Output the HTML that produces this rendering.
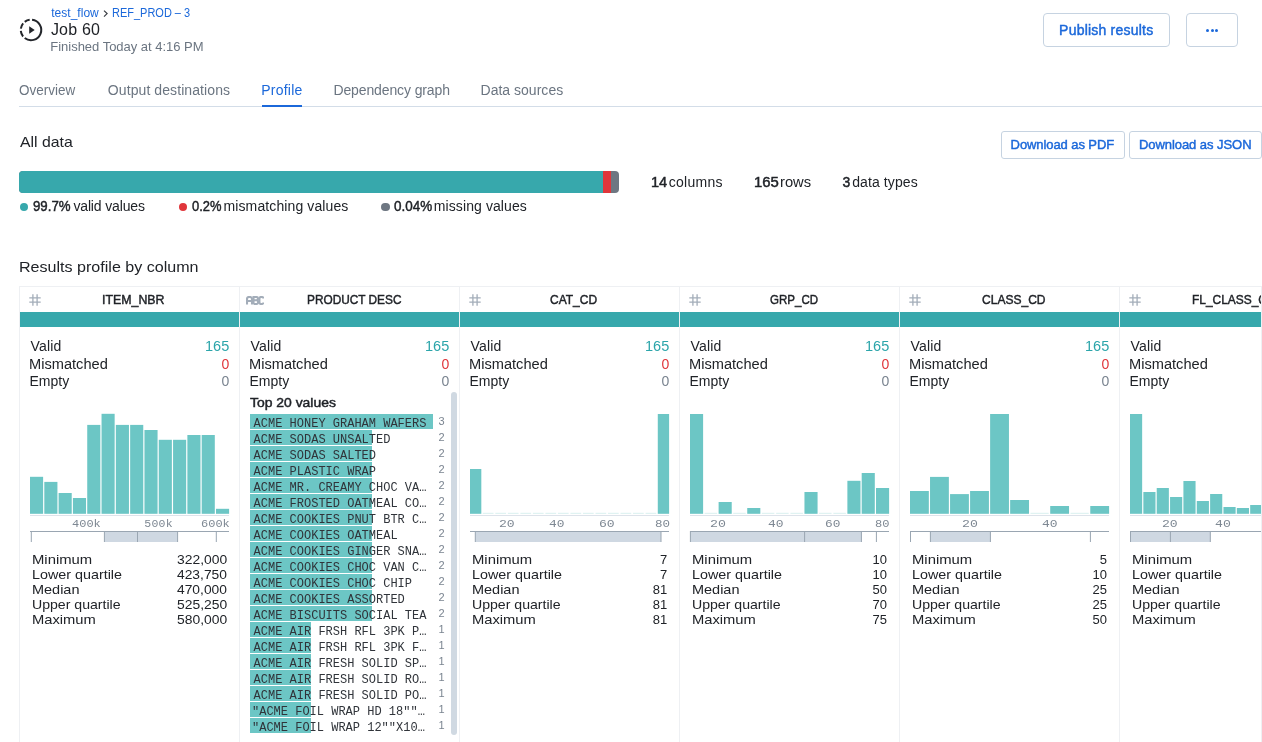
<!DOCTYPE html>
<html><head><meta charset="utf-8"><title>Job 60 Profile</title>
<style>
html,body{margin:0;padding:0;background:#fff;}
body{width:1262px;height:742px;overflow:hidden;position:relative;font-family:"Liberation Sans",sans-serif;}
.t{position:absolute;white-space:pre;}
.r{position:absolute;box-sizing:border-box;}
#wrap{position:absolute;left:0;top:0;width:1262px;height:742px;will-change:transform;}
</style></head><body><div id="wrap">
<svg class="r" style="left:18px;top:17px" width="26" height="26" viewBox="0 0 26 26">
<g fill="none" stroke="#23262b" stroke-width="2">
<path d="M14.07 2.81 A10.25 10.25 0 1 1 6.69 21.08"/>
<path d="M5.08 19.51 A10.25 10.25 0 0 1 2.79 13.95"/>
<path d="M2.84 11.68 A10.25 10.25 0 0 1 5.15 6.41"/>
<path d="M6.75 4.88 A10.25 10.25 0 0 1 11.68 2.84"/>
</g>
<path d="M11.2 9.2 L16.7 13 L11.2 16.8 Z" fill="#23262b"/>
</svg>
<div class="t" style="left:51.20px;top:6px;font-size:12px;line-height:15px;color:#1b68da;letter-spacing:0.025px;">test_flow</div>
<svg class="r" style="left:102px;top:9px" width="8" height="9" viewBox="0 0 8 9"><path d="M2 1.6 L5.1 4.6 L2 7.6" fill="none" stroke="#3a3e44" stroke-width="1.2"/></svg>
<div class="t" style="left:112.08px;top:6px;font-size:12px;line-height:15px;color:#1b68da;transform:scaleX(0.9154);transform-origin:0 0;">REF_PROD – 3</div>
<div class="t" style="left:50.90px;top:20px;font-size:16px;line-height:20px;color:#202328;letter-spacing:0.200px;">Job 60</div>
<div class="t" style="left:50.30px;top:39px;font-size:13px;line-height:16px;color:#6b7581;letter-spacing:-0.017px;">Finished Today at 4:16 PM</div>
<div class="r" style="left:1043px;top:13px;width:127px;height:34px;border:1px solid #c6d3e1;border-radius:4px;"></div>
<div class="t" style="left:1059.10px;top:21px;font-size:14px;line-height:18px;color:#1b68da;letter-spacing:0.214px;-webkit-text-stroke:0.45px currentColor;">Publish results</div>
<div class="r" style="left:1186px;top:13px;width:52px;height:34px;border:1px solid #c6d3e1;border-radius:4px;"></div>
<div class="r" style="left:1206.0px;top:28.6px;width:3px;height:3px;border-radius:50%;background:#1b68da"></div>
<div class="r" style="left:1210.5px;top:28.6px;width:3px;height:3px;border-radius:50%;background:#1b68da"></div>
<div class="r" style="left:1215.0px;top:28.6px;width:3px;height:3px;border-radius:50%;background:#1b68da"></div>
<div class="r" style="left:19px;top:106px;width:1243px;height:1px;background:#d3dde8;"></div>
<div class="r" style="left:262px;top:105px;width:40px;height:2px;background:#1b68da;"></div>
<div class="t" style="left:18.93px;top:81px;font-size:14px;line-height:18px;color:#6b7581;transform:scaleX(0.9618);transform-origin:0 0;">Overview</div>
<div class="t" style="left:107.80px;top:81px;font-size:14px;line-height:18px;color:#6b7581;letter-spacing:0.089px;">Output destinations</div>
<div class="t" style="left:261.30px;top:81px;font-size:14px;line-height:18px;color:#1b68da;letter-spacing:0.217px;">Profile</div>
<div class="t" style="left:333.40px;top:81px;font-size:14px;line-height:18px;color:#6b7581;letter-spacing:-0.113px;">Dependency graph</div>
<div class="t" style="left:480.50px;top:81px;font-size:14px;line-height:18px;color:#6b7581;letter-spacing:0.018px;">Data sources</div>
<div class="t" style="left:19.50px;top:132px;font-size:15px;line-height:19px;color:#202328;transform:scaleX(1.0539);transform-origin:0 0;">All data</div>
<div class="r" style="left:1001px;top:131px;width:124px;height:28px;border:1px solid #c6d3e1;border-radius:3px;"></div>
<div class="t" style="left:1010.60px;top:137px;font-size:13px;line-height:16px;color:#1b68da;letter-spacing:-0.086px;-webkit-text-stroke:0.45px currentColor;">Download as PDF</div>
<div class="r" style="left:1129px;top:131px;width:133px;height:28px;border:1px solid #c6d3e1;border-radius:3px;"></div>
<div class="t" style="left:1138.90px;top:137px;font-size:13px;line-height:16px;color:#1b68da;letter-spacing:-0.053px;-webkit-text-stroke:0.45px currentColor;">Download as JSON</div>
<div class="r" style="left:19px;top:171px;width:600px;height:22px;border-radius:4px;overflow:hidden;background:#6e7782"><div class="r" style="left:0;top:0;width:584px;height:22px;background:#37a8ac"></div><div class="r" style="left:584px;top:0;width:8px;height:22px;background:#e0363b"></div></div>
<div class="r" style="left:19.5px;top:202.7px;width:8.4px;height:8.4px;border-radius:50%;background:#37a8ac"></div>
<div class="t" style="left:33.13px;top:197px;font-size:14px;line-height:18px;color:#202328;transform:scaleX(0.9456);transform-origin:0 0;-webkit-text-stroke:0.45px currentColor;">99.7%</div>
<div class="t" style="left:73.40px;top:197px;font-size:14px;line-height:18px;color:#202328;letter-spacing:-0.145px;">valid values</div>
<div class="r" style="left:178.7px;top:202.7px;width:8.4px;height:8.4px;border-radius:50%;background:#e0363b"></div>
<div class="t" style="left:191.54px;top:197px;font-size:14px;line-height:18px;color:#202328;transform:scaleX(0.9226);transform-origin:0 0;-webkit-text-stroke:0.45px currentColor;">0.2%</div>
<div class="t" style="left:223.50px;top:197px;font-size:14px;line-height:18px;color:#202328;letter-spacing:0.112px;">mismatching values</div>
<div class="r" style="left:381.4px;top:202.7px;width:8.4px;height:8.4px;border-radius:50%;background:#6e7782"></div>
<div class="t" style="left:394.32px;top:197px;font-size:14px;line-height:18px;color:#202328;transform:scaleX(0.9612);transform-origin:0 0;-webkit-text-stroke:0.45px currentColor;">0.04%</div>
<div class="t" style="left:433.80px;top:197px;font-size:14px;line-height:18px;color:#202328;letter-spacing:0.092px;">missing values</div>
<div class="t" style="left:650.55px;top:173px;font-size:14px;line-height:18px;color:#202328;transform:scaleX(1.0426);transform-origin:0 0;-webkit-text-stroke:0.45px currentColor;">14</div>
<div class="t" style="left:668.80px;top:173px;font-size:14px;line-height:18px;color:#202328;letter-spacing:0.267px;">columns</div>
<div class="t" style="left:753.93px;top:173px;font-size:14px;line-height:18px;color:#202328;transform:scaleX(1.0645);transform-origin:0 0;-webkit-text-stroke:0.45px currentColor;">165</div>
<div class="t" style="left:779.55px;top:173px;font-size:14px;line-height:18px;color:#202328;transform:scaleX(1.0532);transform-origin:0 0;">rows</div>
<div class="t" style="left:842.60px;top:173px;font-size:14px;line-height:18px;color:#202328;-webkit-text-stroke:0.45px currentColor;">3</div>
<div class="t" style="left:852.20px;top:173px;font-size:14px;line-height:18px;color:#202328;letter-spacing:0.100px;">data types</div>
<div class="t" style="left:18.51px;top:257px;font-size:15px;line-height:19px;color:#202328;transform:scaleX(1.0713);transform-origin:0 0;">Results profile by column</div>
<div class="r" style="left:19px;top:286px;width:1243px;height:1px;background:#eef0f3;"></div>
<div class="r" style="left:19px;top:286px;width:1px;height:456px;background:#eef0f3;"></div>
<div class="r" style="left:239px;top:286px;width:1px;height:456px;background:#eef0f3;"></div>
<div class="r" style="left:459px;top:286px;width:1px;height:456px;background:#eef0f3;"></div>
<div class="r" style="left:679px;top:286px;width:1px;height:456px;background:#eef0f3;"></div>
<div class="r" style="left:899px;top:286px;width:1px;height:456px;background:#eef0f3;"></div>
<div class="r" style="left:1119px;top:286px;width:1px;height:456px;background:#eef0f3;"></div>
<div class="r" style="left:20px;top:312px;width:219px;height:15px;background:#37a8ac;"></div>
<svg class="r" style="left:29px;top:294px" width="12" height="12" viewBox="0 0 12 12"><g stroke="#a3adb9" stroke-width="1.3"><path d="M3.9 0.3 V11.7 M8.1 0.3 V11.7 M0.3 3.9 H11.7 M0.3 8.1 H11.7"/></g></svg>
<div class="t" style="left:102.46px;top:292px;font-size:13px;line-height:16px;color:#202328;transform:scaleX(0.9515);transform-origin:0 0;-webkit-text-stroke:0.45px currentColor;">ITEM_NBR</div>
<div class="t" style="left:30.40px;top:337px;font-size:14px;line-height:18px;color:#202328;letter-spacing:0.225px;">Valid</div>
<div class="t" style="left:29.35px;top:355px;font-size:14px;line-height:18px;color:#202328;transform:scaleX(1.0435);transform-origin:0 0;">Mismatched</div>
<div class="t" style="left:29.40px;top:372px;font-size:14px;line-height:18px;color:#202328;letter-spacing:0.025px;">Empty</div>
<div class="t" style="left:204.96px;top:337px;font-size:14px;line-height:18px;color:#2ca5aa;transform:scaleX(1.0369);transform-origin:0 0;">165</div>
<div class="t" style="left:221.40px;top:355px;font-size:14px;line-height:18px;color:#e0363b;">0</div>
<div class="t" style="left:221.40px;top:372px;font-size:14px;line-height:18px;color:#7a8490;">0</div>
<div class="r" style="left:240px;top:312px;width:219px;height:15px;background:#37a8ac;"></div>
<svg class="r" style="left:246px;top:296px" width="18" height="9" viewBox="0 0 18 9"><g fill="none" stroke="#a3adb9" stroke-width="2.1"><path d="M1 8.5 V3 Q1 1 3 1 H4 Q6 1 6 3 V8.5 M1 5 H6"/><path d="M7.5 8 V1 H10.4 Q12 1 12 2.6 Q12 4.3 10.4 4.3 H7.5 M10.4 4.3 Q12.2 4.3 12.2 6.1 Q12.2 8 10.4 8 H7.5"/><path d="M17.4 2.6 Q17.4 1 15.6 1 H15 Q13.4 1 13.4 2.8 V6.2 Q13.4 8 15 8 H15.6 Q17.4 8 17.4 6.4"/></g></svg>
<div class="t" style="left:306.50px;top:292px;font-size:13px;line-height:16px;color:#202328;transform:scaleX(0.9100);transform-origin:0 0;-webkit-text-stroke:0.45px currentColor;">PRODUCT DESC</div>
<div class="t" style="left:250.40px;top:337px;font-size:14px;line-height:18px;color:#202328;letter-spacing:0.225px;">Valid</div>
<div class="t" style="left:249.35px;top:355px;font-size:14px;line-height:18px;color:#202328;transform:scaleX(1.0435);transform-origin:0 0;">Mismatched</div>
<div class="t" style="left:249.40px;top:372px;font-size:14px;line-height:18px;color:#202328;letter-spacing:0.025px;">Empty</div>
<div class="t" style="left:424.96px;top:337px;font-size:14px;line-height:18px;color:#2ca5aa;transform:scaleX(1.0369);transform-origin:0 0;">165</div>
<div class="t" style="left:441.40px;top:355px;font-size:14px;line-height:18px;color:#e0363b;">0</div>
<div class="t" style="left:441.40px;top:372px;font-size:14px;line-height:18px;color:#7a8490;">0</div>
<div class="r" style="left:460px;top:312px;width:219px;height:15px;background:#37a8ac;"></div>
<svg class="r" style="left:469px;top:294px" width="12" height="12" viewBox="0 0 12 12"><g stroke="#a3adb9" stroke-width="1.3"><path d="M3.9 0.3 V11.7 M8.1 0.3 V11.7 M0.3 3.9 H11.7 M0.3 8.1 H11.7"/></g></svg>
<div class="t" style="left:550.35px;top:292px;font-size:13px;line-height:16px;color:#202328;transform:scaleX(0.9237);transform-origin:0 0;-webkit-text-stroke:0.45px currentColor;">CAT_CD</div>
<div class="t" style="left:470.40px;top:337px;font-size:14px;line-height:18px;color:#202328;letter-spacing:0.225px;">Valid</div>
<div class="t" style="left:469.35px;top:355px;font-size:14px;line-height:18px;color:#202328;transform:scaleX(1.0435);transform-origin:0 0;">Mismatched</div>
<div class="t" style="left:469.40px;top:372px;font-size:14px;line-height:18px;color:#202328;letter-spacing:0.025px;">Empty</div>
<div class="t" style="left:644.96px;top:337px;font-size:14px;line-height:18px;color:#2ca5aa;transform:scaleX(1.0369);transform-origin:0 0;">165</div>
<div class="t" style="left:661.40px;top:355px;font-size:14px;line-height:18px;color:#e0363b;">0</div>
<div class="t" style="left:661.40px;top:372px;font-size:14px;line-height:18px;color:#7a8490;">0</div>
<div class="r" style="left:680px;top:312px;width:219px;height:15px;background:#37a8ac;"></div>
<svg class="r" style="left:689px;top:294px" width="12" height="12" viewBox="0 0 12 12"><g stroke="#a3adb9" stroke-width="1.3"><path d="M3.9 0.3 V11.7 M8.1 0.3 V11.7 M0.3 3.9 H11.7 M0.3 8.1 H11.7"/></g></svg>
<div class="t" style="left:769.97px;top:292px;font-size:13px;line-height:16px;color:#202328;transform:scaleX(0.8868);transform-origin:0 0;-webkit-text-stroke:0.45px currentColor;">GRP_CD</div>
<div class="t" style="left:690.40px;top:337px;font-size:14px;line-height:18px;color:#202328;letter-spacing:0.225px;">Valid</div>
<div class="t" style="left:689.35px;top:355px;font-size:14px;line-height:18px;color:#202328;transform:scaleX(1.0435);transform-origin:0 0;">Mismatched</div>
<div class="t" style="left:689.40px;top:372px;font-size:14px;line-height:18px;color:#202328;letter-spacing:0.025px;">Empty</div>
<div class="t" style="left:864.96px;top:337px;font-size:14px;line-height:18px;color:#2ca5aa;transform:scaleX(1.0369);transform-origin:0 0;">165</div>
<div class="t" style="left:881.40px;top:355px;font-size:14px;line-height:18px;color:#e0363b;">0</div>
<div class="t" style="left:881.40px;top:372px;font-size:14px;line-height:18px;color:#7a8490;">0</div>
<div class="r" style="left:900px;top:312px;width:219px;height:15px;background:#37a8ac;"></div>
<svg class="r" style="left:909px;top:294px" width="12" height="12" viewBox="0 0 12 12"><g stroke="#a3adb9" stroke-width="1.3"><path d="M3.9 0.3 V11.7 M8.1 0.3 V11.7 M0.3 3.9 H11.7 M0.3 8.1 H11.7"/></g></svg>
<div class="t" style="left:982.20px;top:292px;font-size:13px;line-height:16px;color:#202328;transform:scaleX(0.9257);transform-origin:0 0;-webkit-text-stroke:0.45px currentColor;">CLASS_CD</div>
<div class="t" style="left:910.40px;top:337px;font-size:14px;line-height:18px;color:#202328;letter-spacing:0.225px;">Valid</div>
<div class="t" style="left:909.35px;top:355px;font-size:14px;line-height:18px;color:#202328;transform:scaleX(1.0435);transform-origin:0 0;">Mismatched</div>
<div class="t" style="left:909.40px;top:372px;font-size:14px;line-height:18px;color:#202328;letter-spacing:0.025px;">Empty</div>
<div class="t" style="left:1084.96px;top:337px;font-size:14px;line-height:18px;color:#2ca5aa;transform:scaleX(1.0369);transform-origin:0 0;">165</div>
<div class="t" style="left:1101.40px;top:355px;font-size:14px;line-height:18px;color:#e0363b;">0</div>
<div class="t" style="left:1101.40px;top:372px;font-size:14px;line-height:18px;color:#7a8490;">0</div>
<div class="r" style="left:1120px;top:312px;width:219px;height:15px;background:#37a8ac;"></div>
<svg class="r" style="left:1129px;top:294px" width="12" height="12" viewBox="0 0 12 12"><g stroke="#a3adb9" stroke-width="1.3"><path d="M3.9 0.3 V11.7 M8.1 0.3 V11.7 M0.3 3.9 H11.7 M0.3 8.1 H11.7"/></g></svg>
<div class="t" style="left:1191.99px;top:292px;font-size:13px;line-height:16px;color:#202328;transform:scaleX(0.9183);transform-origin:0 0;-webkit-text-stroke:0.45px currentColor;">FL_CLASS_CD</div>
<div class="t" style="left:1130.40px;top:337px;font-size:14px;line-height:18px;color:#202328;letter-spacing:0.225px;">Valid</div>
<div class="t" style="left:1129.35px;top:355px;font-size:14px;line-height:18px;color:#202328;transform:scaleX(1.0435);transform-origin:0 0;">Mismatched</div>
<div class="t" style="left:1129.40px;top:372px;font-size:14px;line-height:18px;color:#202328;letter-spacing:0.025px;">Empty</div>
<div class="t" style="left:32.04px;top:552px;font-size:13px;line-height:16px;color:#202328;transform:scaleX(1.1417);transform-origin:0 0;">Minimum</div>
<div class="t" style="left:176.87px;top:552px;font-size:13px;line-height:16px;color:#202328;transform:scaleX(1.0674);transform-origin:0 0;">322,000</div>
<div class="t" style="left:32.09px;top:567px;font-size:13px;line-height:16px;color:#202328;transform:scaleX(1.1025);transform-origin:0 0;">Lower quartile</div>
<div class="t" style="left:177.08px;top:567px;font-size:13px;line-height:16px;color:#202328;transform:scaleX(1.0628);transform-origin:0 0;">423,750</div>
<div class="t" style="left:32.08px;top:582px;font-size:13px;line-height:16px;color:#202328;transform:scaleX(1.1130);transform-origin:0 0;">Median</div>
<div class="t" style="left:177.08px;top:582px;font-size:13px;line-height:16px;color:#202328;transform:scaleX(1.0628);transform-origin:0 0;">470,000</div>
<div class="t" style="left:32.22px;top:597px;font-size:13px;line-height:16px;color:#202328;transform:scaleX(1.0849);transform-origin:0 0;">Upper quartile</div>
<div class="t" style="left:176.87px;top:597px;font-size:13px;line-height:16px;color:#202328;transform:scaleX(1.0674);transform-origin:0 0;">525,250</div>
<div class="t" style="left:32.05px;top:612px;font-size:13px;line-height:16px;color:#202328;transform:scaleX(1.1324);transform-origin:0 0;">Maximum</div>
<div class="t" style="left:176.87px;top:612px;font-size:13px;line-height:16px;color:#202328;transform:scaleX(1.0674);transform-origin:0 0;">580,000</div>
<div class="t" style="left:472.04px;top:552px;font-size:13px;line-height:16px;color:#202328;transform:scaleX(1.1417);transform-origin:0 0;">Minimum</div>
<div class="t" style="left:659.90px;top:552px;font-size:13px;line-height:16px;color:#202328;">7</div>
<div class="t" style="left:472.09px;top:567px;font-size:13px;line-height:16px;color:#202328;transform:scaleX(1.1025);transform-origin:0 0;">Lower quartile</div>
<div class="t" style="left:659.90px;top:567px;font-size:13px;line-height:16px;color:#202328;">7</div>
<div class="t" style="left:472.08px;top:582px;font-size:13px;line-height:16px;color:#202328;transform:scaleX(1.1130);transform-origin:0 0;">Median</div>
<div class="t" style="left:652.70px;top:582px;font-size:13px;line-height:16px;color:#202328;">81</div>
<div class="t" style="left:472.22px;top:597px;font-size:13px;line-height:16px;color:#202328;transform:scaleX(1.0849);transform-origin:0 0;">Upper quartile</div>
<div class="t" style="left:652.70px;top:597px;font-size:13px;line-height:16px;color:#202328;">81</div>
<div class="t" style="left:472.05px;top:612px;font-size:13px;line-height:16px;color:#202328;transform:scaleX(1.1324);transform-origin:0 0;">Maximum</div>
<div class="t" style="left:652.70px;top:612px;font-size:13px;line-height:16px;color:#202328;">81</div>
<div class="t" style="left:692.04px;top:552px;font-size:13px;line-height:16px;color:#202328;transform:scaleX(1.1417);transform-origin:0 0;">Minimum</div>
<div class="t" style="left:872.60px;top:552px;font-size:13px;line-height:16px;color:#202328;">10</div>
<div class="t" style="left:692.09px;top:567px;font-size:13px;line-height:16px;color:#202328;transform:scaleX(1.1025);transform-origin:0 0;">Lower quartile</div>
<div class="t" style="left:872.60px;top:567px;font-size:13px;line-height:16px;color:#202328;">10</div>
<div class="t" style="left:692.08px;top:582px;font-size:13px;line-height:16px;color:#202328;transform:scaleX(1.1130);transform-origin:0 0;">Median</div>
<div class="t" style="left:872.60px;top:582px;font-size:13px;line-height:16px;color:#202328;">50</div>
<div class="t" style="left:692.22px;top:597px;font-size:13px;line-height:16px;color:#202328;transform:scaleX(1.0849);transform-origin:0 0;">Upper quartile</div>
<div class="t" style="left:872.60px;top:597px;font-size:13px;line-height:16px;color:#202328;">70</div>
<div class="t" style="left:692.05px;top:612px;font-size:13px;line-height:16px;color:#202328;transform:scaleX(1.1324);transform-origin:0 0;">Maximum</div>
<div class="t" style="left:872.60px;top:612px;font-size:13px;line-height:16px;color:#202328;">75</div>
<div class="t" style="left:912.04px;top:552px;font-size:13px;line-height:16px;color:#202328;transform:scaleX(1.1417);transform-origin:0 0;">Minimum</div>
<div class="t" style="left:1099.80px;top:552px;font-size:13px;line-height:16px;color:#202328;">5</div>
<div class="t" style="left:912.09px;top:567px;font-size:13px;line-height:16px;color:#202328;transform:scaleX(1.1025);transform-origin:0 0;">Lower quartile</div>
<div class="t" style="left:1092.60px;top:567px;font-size:13px;line-height:16px;color:#202328;">10</div>
<div class="t" style="left:912.08px;top:582px;font-size:13px;line-height:16px;color:#202328;transform:scaleX(1.1130);transform-origin:0 0;">Median</div>
<div class="t" style="left:1092.60px;top:582px;font-size:13px;line-height:16px;color:#202328;">25</div>
<div class="t" style="left:912.22px;top:597px;font-size:13px;line-height:16px;color:#202328;transform:scaleX(1.0849);transform-origin:0 0;">Upper quartile</div>
<div class="t" style="left:1092.60px;top:597px;font-size:13px;line-height:16px;color:#202328;">25</div>
<div class="t" style="left:912.05px;top:612px;font-size:13px;line-height:16px;color:#202328;transform:scaleX(1.1324);transform-origin:0 0;">Maximum</div>
<div class="t" style="left:1092.60px;top:612px;font-size:13px;line-height:16px;color:#202328;">50</div>
<div class="t" style="left:1132.04px;top:552px;font-size:13px;line-height:16px;color:#202328;transform:scaleX(1.1417);transform-origin:0 0;">Minimum</div>
<div class="t" style="left:1132.09px;top:567px;font-size:13px;line-height:16px;color:#202328;transform:scaleX(1.1025);transform-origin:0 0;">Lower quartile</div>
<div class="t" style="left:1132.08px;top:582px;font-size:13px;line-height:16px;color:#202328;transform:scaleX(1.1130);transform-origin:0 0;">Median</div>
<div class="t" style="left:1132.22px;top:597px;font-size:13px;line-height:16px;color:#202328;transform:scaleX(1.0849);transform-origin:0 0;">Upper quartile</div>
<div class="t" style="left:1132.05px;top:612px;font-size:13px;line-height:16px;color:#202328;transform:scaleX(1.1324);transform-origin:0 0;">Maximum</div>
<svg class="r" style="left:0;top:0" width="1262" height="742" viewBox="0 0 1262 742">
<rect x="30.00" y="476.80" width="13.11" height="37.00" fill="#6cc6c5"/>
<rect x="44.31" y="481.90" width="13.11" height="31.90" fill="#6cc6c5"/>
<rect x="58.61" y="493.00" width="13.11" height="20.80" fill="#6cc6c5"/>
<rect x="72.92" y="498.00" width="13.11" height="15.80" fill="#6cc6c5"/>
<rect x="87.23" y="424.90" width="13.11" height="88.90" fill="#6cc6c5"/>
<rect x="101.54" y="413.80" width="13.11" height="100.00" fill="#6cc6c5"/>
<rect x="115.84" y="424.90" width="13.11" height="88.90" fill="#6cc6c5"/>
<rect x="130.15" y="424.90" width="13.11" height="88.90" fill="#6cc6c5"/>
<rect x="144.46" y="430.00" width="13.11" height="83.80" fill="#6cc6c5"/>
<rect x="158.76" y="439.80" width="13.11" height="74.00" fill="#6cc6c5"/>
<rect x="173.07" y="439.80" width="13.11" height="74.00" fill="#6cc6c5"/>
<rect x="187.38" y="435.00" width="13.11" height="78.80" fill="#6cc6c5"/>
<rect x="201.69" y="435.00" width="13.11" height="78.80" fill="#6cc6c5"/>
<rect x="215.99" y="508.80" width="13.11" height="5.00" fill="#6cc6c5"/>
<rect x="30" y="515" width="199" height="1" fill="#dde3ea"/>
<rect x="104.40" y="531.5" width="73.20" height="10.5" fill="#cfd8e2"/>
<rect x="30" y="531" width="199" height="1" fill="#9aa6b2"/>
<rect x="30.80" y="531" width="1" height="11" fill="#9aa6b2"/>
<rect x="103.90" y="531" width="1" height="11" fill="#9aa6b2"/>
<rect x="137.00" y="531" width="1" height="11" fill="#9aa6b2"/>
<rect x="177.10" y="531" width="1" height="11" fill="#9aa6b2"/>
<rect x="215.80" y="531" width="1" height="11" fill="#9aa6b2"/>
<rect x="470.00" y="469.00" width="11.32" height="44.80" fill="#6cc6c5"/>
<rect x="482.82" y="512.80" width="10.72" height="1" fill="#d9f0ef"/>
<rect x="495.34" y="512.80" width="10.72" height="1" fill="#d9f0ef"/>
<rect x="507.86" y="512.80" width="10.72" height="1" fill="#d9f0ef"/>
<rect x="520.38" y="512.80" width="10.72" height="1" fill="#d9f0ef"/>
<rect x="532.89" y="512.80" width="10.72" height="1" fill="#d9f0ef"/>
<rect x="545.41" y="512.80" width="10.72" height="1" fill="#d9f0ef"/>
<rect x="557.93" y="512.80" width="10.72" height="1" fill="#d9f0ef"/>
<rect x="570.45" y="512.80" width="10.72" height="1" fill="#d9f0ef"/>
<rect x="582.97" y="512.80" width="10.72" height="1" fill="#d9f0ef"/>
<rect x="595.49" y="512.80" width="10.72" height="1" fill="#d9f0ef"/>
<rect x="608.01" y="512.80" width="10.72" height="1" fill="#d9f0ef"/>
<rect x="620.52" y="512.80" width="10.72" height="1" fill="#d9f0ef"/>
<rect x="633.04" y="512.80" width="10.72" height="1" fill="#d9f0ef"/>
<rect x="645.56" y="512.80" width="10.72" height="1" fill="#d9f0ef"/>
<rect x="657.78" y="414.00" width="11.32" height="99.80" fill="#6cc6c5"/>
<rect x="470" y="515" width="199" height="1" fill="#dde3ea"/>
<rect x="475.30" y="531.5" width="185.70" height="10.5" fill="#cfd8e2"/>
<rect x="470" y="531" width="199" height="1" fill="#9aa6b2"/>
<rect x="474.80" y="531" width="1" height="11" fill="#9aa6b2"/>
<rect x="660.50" y="531" width="1" height="11" fill="#9aa6b2"/>
<rect x="690.00" y="414.00" width="13.11" height="99.80" fill="#6cc6c5"/>
<rect x="704.61" y="512.80" width="12.51" height="1" fill="#d9f0ef"/>
<rect x="718.61" y="502.00" width="13.11" height="11.80" fill="#6cc6c5"/>
<rect x="733.22" y="512.80" width="12.51" height="1" fill="#d9f0ef"/>
<rect x="747.23" y="508.00" width="13.11" height="5.80" fill="#6cc6c5"/>
<rect x="761.84" y="512.80" width="12.51" height="1" fill="#d9f0ef"/>
<rect x="776.14" y="512.80" width="12.51" height="1" fill="#d9f0ef"/>
<rect x="790.45" y="512.80" width="12.51" height="1" fill="#d9f0ef"/>
<rect x="804.46" y="492.00" width="13.11" height="21.80" fill="#6cc6c5"/>
<rect x="819.06" y="512.80" width="12.51" height="1" fill="#d9f0ef"/>
<rect x="833.37" y="512.80" width="12.51" height="1" fill="#d9f0ef"/>
<rect x="847.38" y="480.80" width="13.11" height="33.00" fill="#6cc6c5"/>
<rect x="861.69" y="473.00" width="13.11" height="40.80" fill="#6cc6c5"/>
<rect x="875.99" y="488.00" width="13.11" height="25.80" fill="#6cc6c5"/>
<rect x="690" y="515" width="199" height="1" fill="#dde3ea"/>
<rect x="690.40" y="531.5" width="171.00" height="10.5" fill="#cfd8e2"/>
<rect x="690" y="531" width="199" height="1" fill="#9aa6b2"/>
<rect x="689.90" y="531" width="1" height="11" fill="#9aa6b2"/>
<rect x="804.10" y="531" width="1" height="11" fill="#9aa6b2"/>
<rect x="860.90" y="531" width="1" height="11" fill="#9aa6b2"/>
<rect x="875.90" y="531" width="1" height="11" fill="#9aa6b2"/>
<rect x="910.00" y="491.00" width="18.83" height="22.80" fill="#6cc6c5"/>
<rect x="930.03" y="476.90" width="18.83" height="36.90" fill="#6cc6c5"/>
<rect x="950.06" y="494.10" width="18.83" height="19.70" fill="#6cc6c5"/>
<rect x="970.09" y="491.00" width="18.83" height="22.80" fill="#6cc6c5"/>
<rect x="990.12" y="414.00" width="18.83" height="99.80" fill="#6cc6c5"/>
<rect x="1010.15" y="500.00" width="18.83" height="13.80" fill="#6cc6c5"/>
<rect x="1030.48" y="512.80" width="18.23" height="1" fill="#d9f0ef"/>
<rect x="1050.21" y="506.00" width="18.83" height="7.80" fill="#6cc6c5"/>
<rect x="1070.54" y="512.80" width="18.23" height="1" fill="#d9f0ef"/>
<rect x="1090.27" y="506.00" width="18.83" height="7.80" fill="#6cc6c5"/>
<rect x="910" y="515" width="199" height="1" fill="#dde3ea"/>
<rect x="930.40" y="531.5" width="60.00" height="10.5" fill="#cfd8e2"/>
<rect x="910" y="531" width="199" height="1" fill="#9aa6b2"/>
<rect x="910.00" y="531" width="1" height="11" fill="#9aa6b2"/>
<rect x="929.90" y="531" width="1" height="11" fill="#9aa6b2"/>
<rect x="989.90" y="531" width="1" height="11" fill="#9aa6b2"/>
<rect x="1089.90" y="531" width="1" height="11" fill="#9aa6b2"/>
<rect x="1130.00" y="414.00" width="12.15" height="99.80" fill="#6cc6c5"/>
<rect x="1143.35" y="492.00" width="12.15" height="21.80" fill="#6cc6c5"/>
<rect x="1156.71" y="488.00" width="12.15" height="25.80" fill="#6cc6c5"/>
<rect x="1170.06" y="497.00" width="12.15" height="16.80" fill="#6cc6c5"/>
<rect x="1183.41" y="481.00" width="12.15" height="32.80" fill="#6cc6c5"/>
<rect x="1196.77" y="501.00" width="12.15" height="12.80" fill="#6cc6c5"/>
<rect x="1210.12" y="494.00" width="12.15" height="19.80" fill="#6cc6c5"/>
<rect x="1223.47" y="507.00" width="12.15" height="6.80" fill="#6cc6c5"/>
<rect x="1236.83" y="508.00" width="12.15" height="5.80" fill="#6cc6c5"/>
<rect x="1250.18" y="505.00" width="12.15" height="8.80" fill="#6cc6c5"/>
<rect x="1263.53" y="505.00" width="12.15" height="8.80" fill="#6cc6c5"/>
<rect x="1276.89" y="505.00" width="12.15" height="8.80" fill="#6cc6c5"/>
<rect x="1290.24" y="505.00" width="12.15" height="8.80" fill="#6cc6c5"/>
<rect x="1303.59" y="505.00" width="12.15" height="8.80" fill="#6cc6c5"/>
<rect x="1316.95" y="505.00" width="12.15" height="8.80" fill="#6cc6c5"/>
<rect x="1130" y="515" width="199" height="1" fill="#dde3ea"/>
<rect x="1130.50" y="531.5" width="79.80" height="10.5" fill="#cfd8e2"/>
<rect x="1130" y="531" width="199" height="1" fill="#9aa6b2"/>
<rect x="1130.00" y="531" width="1" height="11" fill="#9aa6b2"/>
<rect x="1169.90" y="531" width="1" height="11" fill="#9aa6b2"/>
<rect x="1209.80" y="531" width="1" height="11" fill="#9aa6b2"/>
</svg>
<div class="t" style="left:72.38px;top:517px;font-size:11.5px;line-height:14px;color:#7e8893;font-family:'Liberation Mono',monospace;transform:scaleX(1.0417);transform-origin:0 0;">400k</div>
<div class="t" style="left:144.30px;top:517px;font-size:11.5px;line-height:14px;color:#7e8893;font-family:'Liberation Mono',monospace;letter-spacing:0.233px;">500k</div>
<div class="t" style="left:200.57px;top:517px;font-size:11.5px;line-height:14px;color:#7e8893;font-family:'Liberation Mono',monospace;transform:scaleX(1.0420);transform-origin:0 0;">600k</div>
<div class="t" style="left:499.49px;top:517px;font-size:11.5px;line-height:14px;color:#7e8893;font-family:'Liberation Mono',monospace;transform:scaleX(1.1382);transform-origin:0 0;">20</div>
<div class="t" style="left:549.33px;top:517px;font-size:11.5px;line-height:14px;color:#7e8893;font-family:'Liberation Mono',monospace;transform:scaleX(1.1200);transform-origin:0 0;">40</div>
<div class="t" style="left:599.09px;top:517px;font-size:11.5px;line-height:14px;color:#7e8893;font-family:'Liberation Mono',monospace;transform:scaleX(1.1382);transform-origin:0 0;">60</div>
<div class="t" style="left:654.74px;top:517px;font-size:11.5px;line-height:14px;color:#7e8893;font-family:'Liberation Mono',monospace;transform:scaleX(1.0887);transform-origin:0 0;">80</div>
<div class="t" style="left:710.48px;top:517px;font-size:11.5px;line-height:14px;color:#7e8893;font-family:'Liberation Mono',monospace;transform:scaleX(1.1545);transform-origin:0 0;">20</div>
<div class="t" style="left:767.92px;top:517px;font-size:11.5px;line-height:14px;color:#7e8893;font-family:'Liberation Mono',monospace;transform:scaleX(1.1280);transform-origin:0 0;">40</div>
<div class="t" style="left:825.11px;top:517px;font-size:11.5px;line-height:14px;color:#7e8893;font-family:'Liberation Mono',monospace;transform:scaleX(1.1138);transform-origin:0 0;">60</div>
<div class="t" style="left:875.27px;top:517px;font-size:11.5px;line-height:14px;color:#7e8893;font-family:'Liberation Mono',monospace;transform:scaleX(1.0484);transform-origin:0 0;">80</div>
<div class="t" style="left:961.88px;top:517px;font-size:11.5px;line-height:14px;color:#7e8893;font-family:'Liberation Mono',monospace;transform:scaleX(1.1463);transform-origin:0 0;">20</div>
<div class="t" style="left:1042.02px;top:517px;font-size:11.5px;line-height:14px;color:#7e8893;font-family:'Liberation Mono',monospace;transform:scaleX(1.1280);transform-origin:0 0;">40</div>
<div class="t" style="left:1161.89px;top:517px;font-size:11.5px;line-height:14px;color:#7e8893;font-family:'Liberation Mono',monospace;transform:scaleX(1.1382);transform-origin:0 0;">20</div>
<div class="t" style="left:1215.31px;top:517px;font-size:11.5px;line-height:14px;color:#7e8893;font-family:'Liberation Mono',monospace;transform:scaleX(1.1440);transform-origin:0 0;">40</div>
<div class="t" style="left:250.18px;top:395px;font-size:13px;line-height:16px;color:#202328;transform:scaleX(1.0705);transform-origin:0 0;-webkit-text-stroke:0.45px currentColor;">Top 20 values</div>
<div class="r" style="left:451px;top:392px;width:6px;height:343px;background:#d0d9e2;border-radius:3px;"></div>
<div class="r" style="left:250px;top:414px;width:183px;height:15px;background:#6cc6c5;"></div>
<div class="t" style="left:253.60px;top:417px;font-size:12px;line-height:15px;color:#30343a;font-family:'Liberation Mono',monospace;">ACME HONEY GRAHAM WAFERS</div>
<div class="t" style="left:438.60px;top:414px;font-size:11px;line-height:14px;color:#7a8490;">3</div>
<div class="r" style="left:250px;top:430px;width:122px;height:15px;background:#6cc6c5;"></div>
<div class="t" style="left:253.60px;top:433px;font-size:12px;line-height:15px;color:#30343a;font-family:'Liberation Mono',monospace;">ACME SODAS UNSALTED</div>
<div class="t" style="left:438.60px;top:430px;font-size:11px;line-height:14px;color:#7a8490;">2</div>
<div class="r" style="left:250px;top:446px;width:122px;height:15px;background:#6cc6c5;"></div>
<div class="t" style="left:253.60px;top:449px;font-size:12px;line-height:15px;color:#30343a;font-family:'Liberation Mono',monospace;">ACME SODAS SALTED</div>
<div class="t" style="left:438.60px;top:446px;font-size:11px;line-height:14px;color:#7a8490;">2</div>
<div class="r" style="left:250px;top:462px;width:122px;height:15px;background:#6cc6c5;"></div>
<div class="t" style="left:253.60px;top:465px;font-size:12px;line-height:15px;color:#30343a;font-family:'Liberation Mono',monospace;">ACME PLASTIC WRAP</div>
<div class="t" style="left:438.60px;top:462px;font-size:11px;line-height:14px;color:#7a8490;">2</div>
<div class="r" style="left:250px;top:478px;width:122px;height:15px;background:#6cc6c5;"></div>
<div class="t" style="left:253.60px;top:481px;font-size:12px;line-height:15px;color:#30343a;font-family:'Liberation Mono',monospace;">ACME MR. CREAMY CHOC VA…</div>
<div class="t" style="left:438.60px;top:478px;font-size:11px;line-height:14px;color:#7a8490;">2</div>
<div class="r" style="left:250px;top:494px;width:122px;height:15px;background:#6cc6c5;"></div>
<div class="t" style="left:253.60px;top:497px;font-size:12px;line-height:15px;color:#30343a;font-family:'Liberation Mono',monospace;">ACME FROSTED OATMEAL CO…</div>
<div class="t" style="left:438.60px;top:494px;font-size:11px;line-height:14px;color:#7a8490;">2</div>
<div class="r" style="left:250px;top:510px;width:122px;height:15px;background:#6cc6c5;"></div>
<div class="t" style="left:253.60px;top:513px;font-size:12px;line-height:15px;color:#30343a;font-family:'Liberation Mono',monospace;">ACME COOKIES PNUT BTR C…</div>
<div class="t" style="left:438.60px;top:510px;font-size:11px;line-height:14px;color:#7a8490;">2</div>
<div class="r" style="left:250px;top:526px;width:122px;height:15px;background:#6cc6c5;"></div>
<div class="t" style="left:253.60px;top:529px;font-size:12px;line-height:15px;color:#30343a;font-family:'Liberation Mono',monospace;">ACME COOKIES OATMEAL</div>
<div class="t" style="left:438.60px;top:526px;font-size:11px;line-height:14px;color:#7a8490;">2</div>
<div class="r" style="left:250px;top:542px;width:122px;height:15px;background:#6cc6c5;"></div>
<div class="t" style="left:253.60px;top:545px;font-size:12px;line-height:15px;color:#30343a;font-family:'Liberation Mono',monospace;">ACME COOKIES GINGER SNA…</div>
<div class="t" style="left:438.60px;top:542px;font-size:11px;line-height:14px;color:#7a8490;">2</div>
<div class="r" style="left:250px;top:558px;width:122px;height:15px;background:#6cc6c5;"></div>
<div class="t" style="left:253.60px;top:561px;font-size:12px;line-height:15px;color:#30343a;font-family:'Liberation Mono',monospace;">ACME COOKIES CHOC VAN C…</div>
<div class="t" style="left:438.60px;top:558px;font-size:11px;line-height:14px;color:#7a8490;">2</div>
<div class="r" style="left:250px;top:574px;width:122px;height:15px;background:#6cc6c5;"></div>
<div class="t" style="left:253.60px;top:577px;font-size:12px;line-height:15px;color:#30343a;font-family:'Liberation Mono',monospace;">ACME COOKIES CHOC CHIP</div>
<div class="t" style="left:438.60px;top:574px;font-size:11px;line-height:14px;color:#7a8490;">2</div>
<div class="r" style="left:250px;top:590px;width:122px;height:15px;background:#6cc6c5;"></div>
<div class="t" style="left:253.60px;top:593px;font-size:12px;line-height:15px;color:#30343a;font-family:'Liberation Mono',monospace;">ACME COOKIES ASSORTED</div>
<div class="t" style="left:438.60px;top:590px;font-size:11px;line-height:14px;color:#7a8490;">2</div>
<div class="r" style="left:250px;top:606px;width:122px;height:15px;background:#6cc6c5;"></div>
<div class="t" style="left:253.60px;top:609px;font-size:12px;line-height:15px;color:#30343a;font-family:'Liberation Mono',monospace;">ACME BISCUITS SOCIAL TEA</div>
<div class="t" style="left:438.60px;top:606px;font-size:11px;line-height:14px;color:#7a8490;">2</div>
<div class="r" style="left:250px;top:622px;width:61px;height:15px;background:#6cc6c5;"></div>
<div class="t" style="left:253.60px;top:625px;font-size:12px;line-height:15px;color:#30343a;font-family:'Liberation Mono',monospace;">ACME AIR FRSH RFL 3PK P…</div>
<div class="t" style="left:438.60px;top:622px;font-size:11px;line-height:14px;color:#7a8490;">1</div>
<div class="r" style="left:250px;top:638px;width:61px;height:15px;background:#6cc6c5;"></div>
<div class="t" style="left:253.60px;top:641px;font-size:12px;line-height:15px;color:#30343a;font-family:'Liberation Mono',monospace;">ACME AIR FRSH RFL 3PK F…</div>
<div class="t" style="left:438.60px;top:638px;font-size:11px;line-height:14px;color:#7a8490;">1</div>
<div class="r" style="left:250px;top:654px;width:61px;height:15px;background:#6cc6c5;"></div>
<div class="t" style="left:253.60px;top:657px;font-size:12px;line-height:15px;color:#30343a;font-family:'Liberation Mono',monospace;">ACME AIR FRESH SOLID SP…</div>
<div class="t" style="left:438.60px;top:654px;font-size:11px;line-height:14px;color:#7a8490;">1</div>
<div class="r" style="left:250px;top:670px;width:61px;height:15px;background:#6cc6c5;"></div>
<div class="t" style="left:253.60px;top:673px;font-size:12px;line-height:15px;color:#30343a;font-family:'Liberation Mono',monospace;">ACME AIR FRESH SOLID RO…</div>
<div class="t" style="left:438.60px;top:670px;font-size:11px;line-height:14px;color:#7a8490;">1</div>
<div class="r" style="left:250px;top:686px;width:61px;height:15px;background:#6cc6c5;"></div>
<div class="t" style="left:253.60px;top:689px;font-size:12px;line-height:15px;color:#30343a;font-family:'Liberation Mono',monospace;">ACME AIR FRESH SOLID PO…</div>
<div class="t" style="left:438.60px;top:686px;font-size:11px;line-height:14px;color:#7a8490;">1</div>
<div class="r" style="left:250px;top:702px;width:61px;height:15px;background:#6cc6c5;"></div>
<div class="t" style="left:252.00px;top:705px;font-size:12px;line-height:15px;color:#30343a;font-family:'Liberation Mono',monospace;">"ACME FOIL WRAP HD 18""…</div>
<div class="t" style="left:438.60px;top:702px;font-size:11px;line-height:14px;color:#7a8490;">1</div>
<div class="r" style="left:250px;top:718px;width:61px;height:15px;background:#6cc6c5;"></div>
<div class="t" style="left:252.00px;top:721px;font-size:12px;line-height:15px;color:#30343a;font-family:'Liberation Mono',monospace;">"ACME FOIL WRAP 12""X10…</div>
<div class="t" style="left:438.60px;top:718px;font-size:11px;line-height:14px;color:#7a8490;">1</div>
<div class="r" style="left:1261px;top:286px;width:1px;height:456px;background:#fff;border-left:1px solid #eef0f3;"></div>
</div></body></html>
